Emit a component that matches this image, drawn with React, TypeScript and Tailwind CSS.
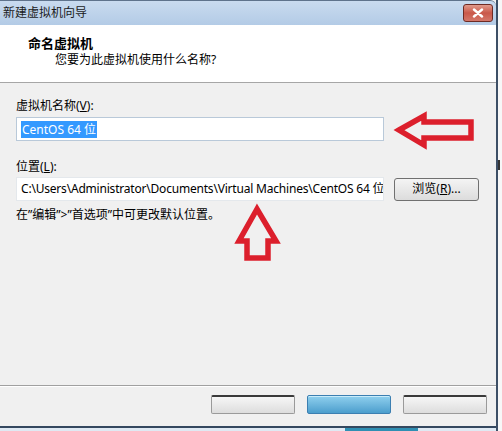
import React from "react";

const font = { fontFamily: '"Noto Sans", "Noto Sans CJK SC", sans-serif' };

function WizardButton({ kind }: { kind: "plain" | "primary" }) {
  const look =
    kind === "primary"
      ? "border-[#3c7fb1] bg-gradient-to-b from-[#8fd0ee] to-[#4b9ecd] shadow-[inset_0_1px_0_#c8ecfb]"
      : "border-[#9a9a9a] border-t-[#3a3a3a] border-t-2 bg-gradient-to-b from-[#f6f6f6] to-[#dddddd]";
  return <div className={`h-[19px] w-[84px] rounded-[2px] border ${look}`} />;
}

function Arrows() {
  return (
    <>
      <svg
        className="pointer-events-none absolute left-[390px] top-[108px]"
        width="92"
        height="46"
        viewBox="0 0 92 46"
      >
        <polygon
          points="9,22 34,8 34,14 81,14 81,30 34,30 34,37"
          fill="none"
          stroke="#dc1f2c"
          strokeWidth="5.5"
          strokeLinejoin="miter"
        />
      </svg>
      <svg
        className="pointer-events-none absolute left-[229px] top-[201px]"
        width="56"
        height="66"
        viewBox="0 0 56 66"
      >
        <polygon
          points="28,8 10,40 18,40 18,57 39,57 39,40 47,40"
          fill="none"
          stroke="#dc1f2c"
          strokeWidth="5.5"
          strokeLinejoin="miter"
        />
      </svg>
    </>
  );
}

export default function App() {
  return (
    <div
      className="relative flex h-[431px] w-[502px] overflow-hidden bg-[#f7f7f7] text-[12px] text-black"
      style={font}
    >
      <div className="flex w-[498px] flex-col">
        <div className="flex h-[431px] flex-col border-r-2 border-[#3d4f66] bg-[#f0f0f0]">
          {/* title bar */}
          <div className="flex h-[25px] items-center justify-between rounded-tr-[6px] border-t border-[#5f738c] bg-gradient-to-b from-[#c9dbef] to-[#b3cbe6] pl-[3px] pr-[3px]">
            <span className="leading-none text-[#1b1b1b]">新建虚拟机向导</span>
            <div className="flex h-[18px] w-[30px] items-center justify-center rounded-[3px] border border-[#6e2b24] bg-gradient-to-b from-[#e09a8c] via-[#c9584a] to-[#d4776a]">
              <svg width="12" height="10" viewBox="0 0 12 10">
                <path
                  d="M2 1.5 L10 8.5 M10 1.5 L2 8.5"
                  stroke="#ffffff"
                  strokeWidth="2.4"
                  strokeLinecap="round"
                />
              </svg>
            </div>
          </div>

          {/* header */}
          <div className="h-[58px] border-b border-[#a6a6a6] bg-white pl-[28px] pt-[10px]">
            <div className="text-[13px] font-bold leading-[16px]">命名虚拟机</div>
            <div className="pl-[27px] pt-[1px] leading-[16px]">您要为此虚拟机使用什么名称?</div>
          </div>

          {/* body */}
          <div className="flex flex-1 flex-col px-[16px] pt-[15px]">
            <div className="leading-[16px]">
              虚拟机名称(<span className="underline">V</span>):
            </div>
            <div className="mt-[3px] flex h-[24px] w-[368px] items-center border border-[#b9c9d9] bg-white pl-[4px]">
              <span className="bg-[#3399ff] px-[1px] leading-[17px] text-white">CentOS 64 位</span>
            </div>

            <div className="mt-[18px] leading-[16px]">
              位置(<span className="underline">L</span>):
            </div>
            <div className="mt-[2px] flex items-center gap-[10px]">
              <div className="flex h-[24px] w-[368px] items-center overflow-hidden whitespace-nowrap border border-[#e4e8ec] bg-white pl-[4px] tracking-[-0.2px]">
                C:\Users\Administrator\Documents\Virtual Machines\CentOS 64 位
              </div>
              <div className="flex h-[23px] w-[85px] items-center justify-center rounded-[3px] border border-[#707070] bg-gradient-to-b from-[#f4f4f4] to-[#dcdcdc]">
                浏览(<span className="underline">R</span>)...
              </div>
            </div>
            <div className="mt-[6px] leading-[16px]">{"在”编辑”>”首选项”中可更改默认位置。"}</div>
          </div>

          {/* footer */}
          <div className="flex h-[41px] items-start justify-end gap-[12px] border-t border-[#a0a0a0] pr-[9px] pt-[9px] shadow-[inset_0_1px_0_#ffffff]">
            <WizardButton kind="plain" />
            <WizardButton kind="primary" />
            <WizardButton kind="plain" />
          </div>
          <div className="h-[2px] bg-[#34485f]" />
          <div className="flex h-[3px] bg-[#dfe9f3]">
            <div className="ml-[345px] w-[73px] bg-[#2f8fb3]" />
          </div>
        </div>
      </div>
      <div className="flex flex-1 flex-col pt-[160px]">
        <div className="h-[10px] w-[2px] bg-[#333333]" />
      </div>
      <Arrows />
    </div>
  );
}
